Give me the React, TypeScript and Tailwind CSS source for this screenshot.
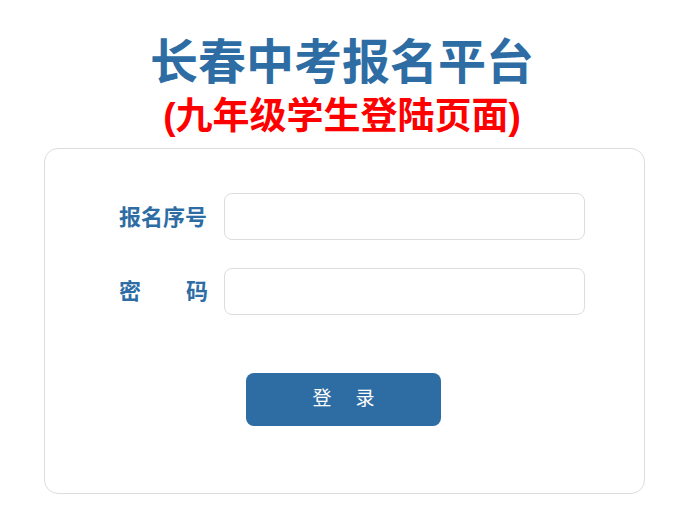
export default function App() {
  const font = { fontFamily: '"Liberation Sans", "Noto Sans CJK SC", sans-serif' };
  return (
    <div className="min-h-[524px] w-[684px] bg-white" style={font}>
      <div className="pt-[35px] text-center">
        <h1 className="text-[48px] font-bold leading-[56px] text-[#2e6da4]">长春中考报名平台</h1>
        <h2 className="mt-[4px] text-[37px] font-bold leading-[44px] text-[#ff0000]">(九年级学生登陆页面)</h2>
      </div>
      <div className="ml-[44px] mt-[9px] h-[346px] w-[601px] rounded-[14px] border border-[#dddddd] bg-white">
        <form className="flex flex-col pl-[74px] pt-[44px]" onSubmit={(e) => e.preventDefault()}>
          <div className="flex items-center">
            <label className="w-[89px] whitespace-nowrap pt-[1px] text-[22px] font-bold text-[#2e6da4]">报名序号</label>
            <input className="ml-[16px] h-[47px] w-[361px] rounded-[8px] border border-[#dddddd] outline-none" type="text" />
          </div>
          <div className="mt-[28px] flex items-center">
            <label className="flex w-[89px] justify-between text-[22px] font-bold text-[#2e6da4]">
              <span>密</span>
              <span>码</span>
            </label>
            <input className="ml-[16px] h-[47px] w-[361px] rounded-[8px] border border-[#dddddd] outline-none" type="password" />
          </div>
          <button
            type="submit"
            className="ml-[127px] mt-[58px] h-[53px] w-[195px] rounded-[8px] bg-[#2e6da4] text-[19px] tracking-[24px] text-white"
          >
            <span className="pl-[24px]">登录</span>
          </button>
        </form>
      </div>
    </div>
  );
}
